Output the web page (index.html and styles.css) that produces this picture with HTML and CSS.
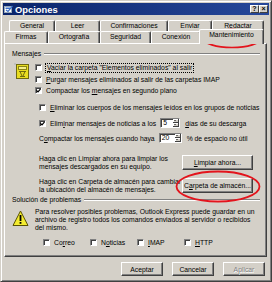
FILE: index.html
```html
<!DOCTYPE html>
<html lang="es">
<head>
    <meta charset="UTF-8">
    <title>Opciones</title>
    <link rel="stylesheet" href="styles.css">
</head>
<body>
<div class="dialog">
    <div class="titlebar">
        <svg class="app-icon" width="9" height="9" viewBox="0 0 9 9">
            <rect x="0.5" y="1.5" width="7" height="6" fill="#fff" stroke="#9ab" />
            <rect x="1.5" y="2.5" width="5" height="1.5" fill="#3a6ec8" />
            <path d="M2 5 L4 6.5 L8.5 1" stroke="#3a6ec8" stroke-width="1.2" fill="none" />
        </svg>
        <span class="title">Opciones</span>
        <span class="caption-btns">
            <span class="cbtn">?</span>
            <span class="cbtn">×</span>
        </span>
    </div>

    <div class="tabs">
        <div class="tab-row back">
            <div class="tab w-general">General</div>
            <div class="tab w-leer">Leer</div>
            <div class="tab w-confirm">Confirmaciones</div>
            <div class="tab w-enviar">Enviar</div>
            <div class="tab w-redactar">Redactar</div>
        </div>
        <div class="tab-row front">
            <div class="tab w-firmas">Firmas</div>
            <div class="tab w-orto">Ortografía</div>
            <div class="tab w-seg">Seguridad</div>
            <div class="tab w-conex">Conexión</div>
            <div class="tab active">Mantenimiento</div>
        </div>
    </div>

    <div class="panel">
        <div class="group-head"><span>Mensajes</span><span class="rule"></span></div>

        <div class="msg-body">
            <svg class="clean-icon" width="17" height="17" viewBox="0 0 17 17">
                <path d="M1 1 L3 3 M3 1 L1 3" stroke="#c0c0c0" stroke-width="1" />
                <rect x="3.5" y="2.5" width="12" height="14" fill="#e8dc20" stroke="#6e6a10" />
                <rect x="5.5" y="4.5" width="8" height="3" fill="#f6f08a" stroke="#8a8418" />
                <path d="M6 9.5 H13 M7 9.5 L9 14 M12 9.5 L10 14 M7 14.5 H12" stroke="#6e6a10" fill="none" />
            </svg>

            <div class="opts">
                <div class="row">
                    <span class="cb"></span>
                    <span class="focus"><u>V</u>aciar la carpeta "Elementos eliminados" al salir</span>
                </div>
                <div class="row tall">
                    <span class="cb"></span>
                    <span><u>P</u>urgar mensajes eliminados al salir de las carpetas IMAP</span>
                </div>
                <div class="row">
                    <span class="cb"><svg width="5" height="5" viewBox="0 0 5 5"><path d="M0.5 2.3 L2 3.8 L4.6 0.8" stroke="#000" stroke-width="1.2" fill="none" /></svg></span>
                    <span>Compactar los <u>m</u>ensajes en segundo plano</span>
                </div>

                <div class="row indent r4">
                    <span class="cb"></span>
                    <span><u>E</u>liminar los cuerpos de los mensajes leídos en los grupos de noticias</span>
                </div>
                <div class="row tall indent r5">
                    <span class="cb"><svg width="5" height="5" viewBox="0 0 5 5"><path d="M0.5 2.3 L2 3.8 L4.6 0.8" stroke="#000" stroke-width="1.2" fill="none" /></svg></span>
                    <span>Elim<u>i</u>nar mensajes de noticias a los</span>
                    <span class="spin"><span class="val">5</span><span class="arrows"><i class="up"></i><i class="down"></i></span></span>
                    <span><u>d</u>ías de su descarga</span>
                </div>
                <div class="row tall indent r6">
                    <span>C<u>o</u>mpactar los mensajes cuando haya</span>
                    <span class="spin wide"><span class="val">20</span><span class="arrows"><i class="up"></i><i class="down"></i></span></span>
                    <span>% de espacio no útil</span>
                </div>

                <div class="action indent first">
                    <div class="note">Haga clic en Limpiar ahora para limpiar los<br>mensajes descargados en su equipo.</div>
                    <span class="btn wide-btn"><span><u>L</u>impiar ahora...</span></span>
                </div>
                <div class="action indent second">
                    <div class="note">Haga clic en Carpeta de almacén para cambiar<br>la ubicación del almacén de mensajes.</div>
                    <span class="btn wide-btn"><span>C<u>a</u>rpeta de almacén...</span></span>
                </div>
            </div>
        </div>

        <div class="group-head trouble-head"><span>Solución de problemas</span><span class="rule"></span></div>

        <div class="trouble">
            <svg class="warn-icon" width="17" height="17" viewBox="0 0 17 17">
                <path d="M8.5 1 L16 15.5 H1 Z" fill="#f4ec30" stroke="#5a5200" stroke-linejoin="round" />
                <rect x="7.6" y="5" width="1.8" height="6" fill="#000" />
                <rect x="7.6" y="12" width="1.8" height="1.8" fill="#000" />
            </svg>
            <div class="note">Para resolver posibles problemas, Outlook Express puede guardar en un<br>archivo de registro todos los comandos enviados al servidor o recibidos<br>del mismo.</div>
        </div>

        <div class="logs">
            <div class="log"><span class="cb"></span><span>Co<u>r</u>reo</span></div>
            <div class="log"><span class="cb"></span><span>N<u>o</u>ticias</span></div>
            <div class="log"><span class="cb"></span><span><u>I</u>MAP</span></div>
            <div class="log"><span class="cb"></span><span><u>H</u>TTP</span></div>
        </div>
    </div>

    <div class="actions">
        <span class="btn">Aceptar</span>
        <span class="btn">Cancelar</span>
        <span class="btn disabled">Aplicar</span>
    </div>

    <!-- red marks drawn over the screenshot -->
    <svg class="ring ring-tab" width="60" height="21" viewBox="0 0 60 21">
        <ellipse cx="30" cy="10.5" rx="28.5" ry="9" fill="none" stroke="#e3141c" stroke-width="1.6" />
    </svg>
    <svg class="ring ring-btn" width="86" height="33" viewBox="0 0 86 33">
        <ellipse cx="43" cy="16.5" rx="41.5" ry="15" fill="none" stroke="#e3141c" stroke-width="1.8" />
    </svg>
</div>
</body>
</html>
```

FILE: styles.css
```css
body {
    margin: 0;
    background-color: #d4d0c8;
    font-family: "Liberation Sans", Arial, sans-serif;
    font-size: 6.8px;
    color: #000000;
}
u {
    text-decoration-thickness: 0.5px;
}
.dialog {
    position: relative;
    width: 272px;
    height: 282px;
    box-sizing: border-box;
    padding: 2px;
    background-color: #d4d0c8;
    border: 1px solid;
    border-color: #d4d0c8 #404040 #404040 #d4d0c8;
    box-shadow: inset 1px 1px #ffffff, inset -1px -1px #808080;
}

/* title bar */
.titlebar {
    display: flex;
    align-items: center;
    height: 12px;
    padding: 0 1px 0 1px;
    background: linear-gradient(90deg, #0a246a, #27489a);
    color: #ffffff;
}
.app-icon {
    margin-right: 2px;
}
.title {
    font-weight: bold;
    font-size: 9.4px;
}
.caption-btns {
    display: flex;
    margin-left: auto;
}
.cbtn {
    width: 9px;
    height: 8px;
    box-sizing: border-box;
    background-color: #d4d0c8;
    border: 1px solid;
    border-color: #ffffff #404040 #404040 #ffffff;
    color: #000000;
    font-weight: bold;
    font-size: 7px;
    line-height: 6px;
    text-align: center;
}

/* tabs */
.tabs {
    margin-top: 5px;
}
.tab-row {
    display: flex;
    align-items: flex-start;
}
.tab-row.back {
    height: 11px;
    padding-left: 6px;
}
.tab-row.front {
    height: 12px;
    padding-left: 1px;
}
.tab {
    box-sizing: border-box;
    height: 12px;
    border-top: 1px solid #ffffff;
    border-left: 1px solid #ffffff;
    border-right: 1px solid #404040;
    border-radius: 2px 2px 0 0;
    box-shadow: inset -1px 0 #808080;
    background-color: #d4d0c8;
    text-align: center;
    line-height: 10px;
    white-space: nowrap;
}
.back .tab {
    height: 11px;
}
.w-general { width: 46px; }
.w-leer { width: 45px; }
.w-confirm { width: 68px; }
.w-enviar { width: 44px; }
.w-redactar { width: 52px; }
.w-firmas { width: 44px; }
.w-orto { width: 52px; }
.w-seg { width: 51px; }
.w-conex { width: 50px; }
.tab.active {
    position: relative;
    z-index: 1;
    width: 65px;
    height: 15px;
    margin: -2px -2px 0 -2px;
    line-height: 9px;
}

/* tab page */
.panel {
    box-sizing: border-box;
    width: 263px;
    height: 214px;
    margin-left: 1px;
    padding-top: 6px;
    border: 1px solid;
    border-color: #ffffff #404040 #404040 #ffffff;
    box-shadow: inset -1px -1px #808080;
}
.group-head {
    display: flex;
    align-items: center;
    height: 8px;
    line-height: 8px;
    margin: 0 6px 0 7px;
}
.group-head .rule {
    flex: 1;
    height: 0;
    margin-left: 3px;
    border-top: 1px solid #808080;
    border-bottom: 1px solid #ffffff;
}
.msg-body {
    display: flex;
    align-items: flex-start;
    margin-top: 4px;
}
.clean-icon {
    margin-left: 8px;
    flex: none;
}
.opts {
    margin-left: 5px;
}
.row {
    display: flex;
    align-items: center;
    height: 11px;
    white-space: nowrap;
}
.row.tall {
    height: 12px;
}
.indent {
    padding-left: 4px;
}
.r4 { margin-top: 6px; }
.r5 { margin-top: 4px; }
.r6 { margin-top: 3px; }
.cb {
    display: flex;
    align-items: center;
    justify-content: center;
    flex: none;
    width: 7px;
    height: 7px;
    box-sizing: border-box;
    margin-right: 4px;
    background-color: #ffffff;
    border: 1px solid;
    border-color: #808080 #ffffff #ffffff #808080;
    box-shadow: inset 1px 1px #404040;
}
.focus {
    outline: 1px dotted #000000;
    padding: 0 1px;
    line-height: 8px;
}
.spin {
    display: flex;
    box-sizing: border-box;
    width: 20px;
    height: 10px;
    margin: 0 5px 0 4px;
    background-color: #ffffff;
    border: 1px solid;
    border-color: #808080 #ffffff #ffffff #808080;
    box-shadow: inset 1px 1px #404040;
}
.spin.wide {
    width: 23px;
}
.spin .val {
    flex: 1;
    padding-left: 2px;
    line-height: 8px;
}
.arrows {
    display: flex;
    flex-direction: column;
    width: 6px;
}
.arrows i {
    flex: 1;
    position: relative;
    background-color: #d4d0c8;
    border-right: 1px solid #404040;
    border-bottom: 1px solid #404040;
    box-shadow: inset 1px 1px #ffffff;
}
.arrows i::after {
    content: "";
    position: absolute;
    left: 1px;
    top: 1px;
    border-left: 1.5px solid transparent;
    border-right: 1.5px solid transparent;
}
.arrows .up::after {
    border-bottom: 1.5px solid #000000;
}
.arrows .down::after {
    border-top: 1.5px solid #000000;
}
.action {
    display: flex;
    align-items: flex-start;
}
.action.first { margin-top: 11px; }
.action.second { margin-top: 7px; }
.note {
    line-height: 8px;
    white-space: nowrap;
}
.action .note {
    width: 143px;
    flex: none;
}
.btn {
    display: flex;
    align-items: center;
    justify-content: center;
    box-sizing: border-box;
    width: 42px;
    height: 14px;
    background-color: #d4d0c8;
    border: 1px solid;
    border-color: #ffffff #404040 #404040 #ffffff;
    box-shadow: inset -1px -1px #808080;
    white-space: nowrap;
}
.wide-btn {
    width: 71px;
    height: 15px;
}
.btn.disabled {
    color: #808080;
    text-shadow: 0.5px 0.5px #ffffff;
}
.trouble-head {
    margin-top: 2px;
}
.trouble {
    display: flex;
    align-items: flex-start;
    margin-top: 4px;
}
.warn-icon {
    flex: none;
    margin: 2px 0 0 7px;
}
.trouble .note {
    margin-left: 6px;
}
.logs {
    display: flex;
    align-items: center;
    height: 10px;
    margin: 5px 0 0 38px;
}
.log {
    display: flex;
    align-items: center;
    width: 47px;
}
.actions {
    display: flex;
    gap: 9px;
    margin-top: 5px;
    padding-left: 118px;
}
.ring {
    position: absolute;
}
.ring-tab {
    left: 201px;
    top: 27px;
}
.ring-btn {
    left: 174px;
    top: 169px;
}
```
